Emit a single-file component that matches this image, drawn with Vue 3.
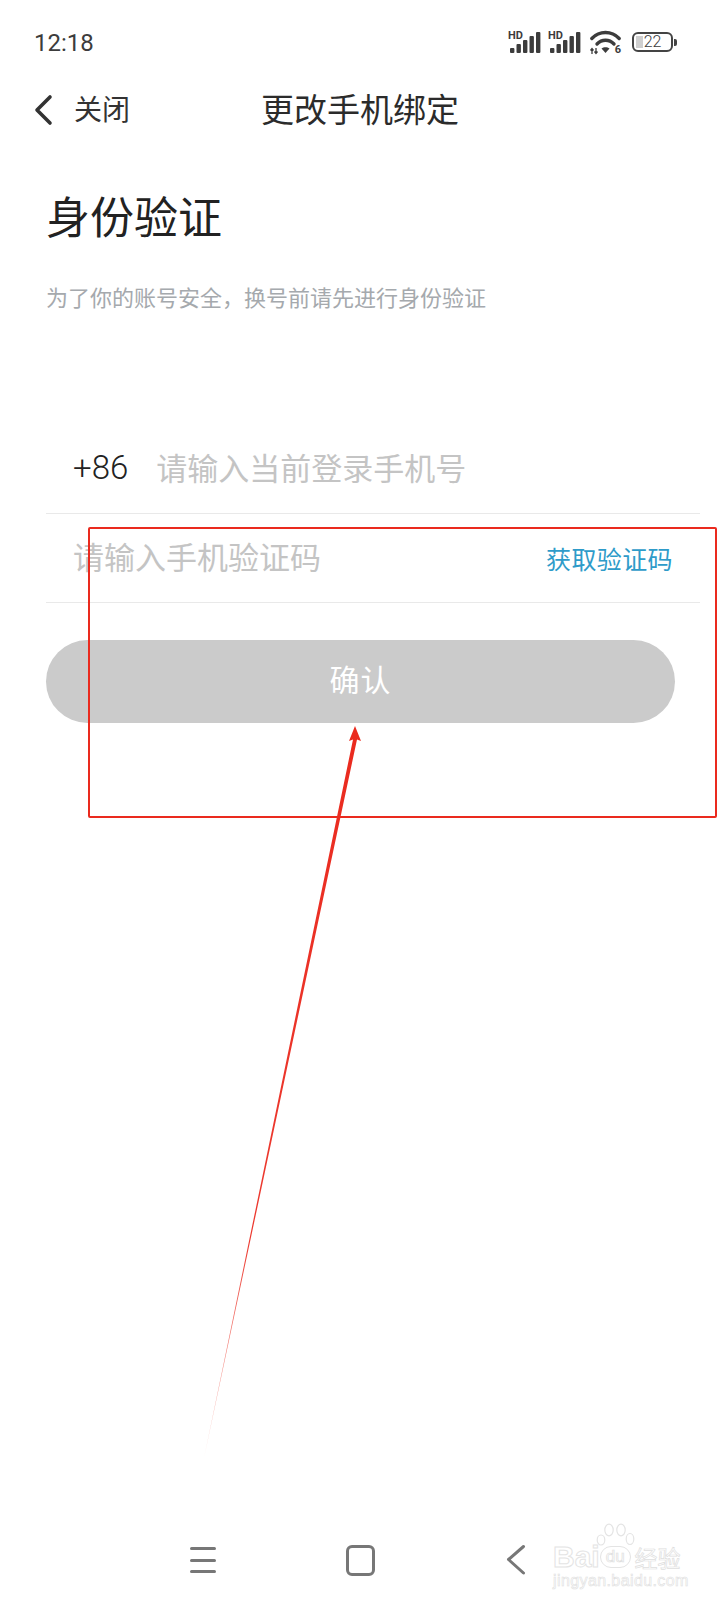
<template>
  <div class="page">
    <div class="status-bar">
      <span class="time">12:18</span>
      <div class="status-icons">
        <div v-for="n in 2" :key="n" class="signal">
          <span class="hd">HD</span>
          <svg width="33" height="21" viewBox="0 0 33 21">
            <rect v-for="b in bars" :key="b.x" :x="b.x" :y="21 - b.h" width="4.400" :height="b.h" rx="1" fill="#3c3c3c" />
          </svg>
        </div>
        <div class="wifi">
          <svg width="31" height="23" viewBox="0 0 31 23">
            <path d="M1.800 7.500C9.500 -0.500 21.500 -0.500 29.200 7.500" fill="none" stroke="#3c3c3c" stroke-width="3.400" stroke-linecap="round" />
            <path d="M7 13C11.800 8 19.200 8 24 13" fill="none" stroke="#3c3c3c" stroke-width="3.400" stroke-linecap="round" />
            <path d="M11.500 17.500C13.800 15.700 17.200 15.700 19.500 17.500L15.500 22Z" fill="#3c3c3c" />
            <path d="M2 18v5M0.500 19.500L2 17.500L3.500 19.500M6 17v5M4.500 20.500L6 22.500L7.500 20.500" stroke="#3c3c3c" stroke-width="1.300" fill="none" />
          </svg>
          <span class="wifi-six">6</span>
        </div>
        <div class="battery">
          <div class="battery-body">
            <span class="battery-fill"></span>
            <span class="battery-num">22</span>
          </div>
          <span class="battery-cap"></span>
        </div>
      </div>
    </div>

    <div class="nav">
      <div class="nav-left">
        <svg width="20" height="32" viewBox="0 0 20 32">
          <path d="M17 3L4 16L17 29" fill="none" stroke="#333" stroke-width="3.600" stroke-linecap="round" stroke-linejoin="round" />
        </svg>
        <span class="close-text">关闭</span>
      </div>
      <span class="nav-title">更改手机绑定</span>
      <div></div>
    </div>

    <h1 class="heading">身份验证</h1>
    <p class="sub">为了你的账号安全，换号前请先进行身份验证</p>

    <div class="form">
      <div class="row">
        <span class="code">+86</span>
        <span class="placeholder">请输入当前登录手机号</span>
      </div>
      <div class="row">
        <span class="placeholder">请输入手机验证码</span>
        <span class="get-code">获取验证码</span>
      </div>
    </div>

    <button class="confirm">确认</button>

    <div class="bottom-nav">
      <div class="menu-icon"><i></i><i></i><i></i></div>
      <div class="home-icon"></div>
      <svg class="back-icon" width="20" height="32" viewBox="0 0 20 32">
        <path d="M17.500 2.500L2.500 15.500L17.500 29" fill="none" stroke="#777" stroke-width="3" stroke-linecap="round" stroke-linejoin="round" />
      </svg>
    </div>

    <!-- annotation drawn on top of the screenshot -->
    <div class="mark-box"></div>
    <svg class="mark-arrow" width="720" height="1600" viewBox="0 0 720 1600">
      <defs>
        <linearGradient id="tail" x1="0" y1="0" x2="0" y2="1">
          <stop offset="0" stop-color="#ea2a1e" />
          <stop offset="0.7" stop-color="#ec3a30" />
          <stop offset="1" stop-color="#f8c8c2" />
        </linearGradient>
      </defs>
      <polygon points="355,726 361,741 357,739.500 204,1458 353,739.500 349,741" fill="url(#tail)" />
    </svg>

    <div class="watermark">
      <svg class="paw" width="40" height="25" viewBox="0 0 40 25">
        <g fill="#fff" stroke="#e4e4e4" stroke-width="1.200">
          <ellipse cx="5" cy="17" rx="3.800" ry="5" />
          <ellipse cx="13" cy="7" rx="4.200" ry="5.800" />
          <ellipse cx="25" cy="7" rx="4.200" ry="5.800" />
          <ellipse cx="34" cy="16" rx="3.800" ry="5.500" />
        </g>
      </svg>
      <div class="wm-main">
        <span class="wm-bai">Bai</span>
        <span class="wm-du">du</span>
        <span class="wm-cn">经验</span>
      </div>
      <div class="wm-url">jingyan.baidu.com</div>
    </div>
  </div>
</template>

<script setup>
const bars = [
  { x: 2, h: 5 },
  { x: 8.500, h: 9 },
  { x: 15, h: 13 },
  { x: 21.500, h: 17 },
  { x: 28, h: 21 }
]
</script>

<style>
html, body {
  margin: 0;
  background: #fff;
}
</style>

<style scoped>
.page {
  position: relative;
  width: 720px;
  height: 1600px;
  overflow: hidden;
  background: #fff;
  display: flex;
  flex-direction: column;
  font-family: "Noto Sans CJK SC", "Noto Sans", sans-serif;
}

.status-bar {
  height: 84px;
  flex-shrink: 0;
  display: flex;
  justify-content: space-between;
  align-items: center;
  padding: 0 43px 0 34px;
}

.time {
  font-family: Roboto, sans-serif;
  font-size: 24px;
  color: #3c3c3c;
  margin-top: 1px;
}

.status-icons {
  display: flex;
  align-items: center;
  gap: 7px;
  height: 24px;
}

.signal {
  position: relative;
  width: 33px;
  height: 21px;
}

.signal svg {
  display: block;
}

.hd {
  position: absolute;
  left: 0;
  top: 0;
  font-family: Roboto, sans-serif;
  font-size: 11px;
  line-height: 8px;
  font-weight: 700;
  color: #3c3c3c;
}

.wifi {
  position: relative;
  width: 31px;
  height: 23px;
  margin: 0 4px 0 2px;
}

.wifi svg {
  display: block;
  overflow: visible;
}

.wifi-six {
  position: absolute;
  right: 0;
  bottom: 0;
  font-family: Roboto, sans-serif;
  font-size: 11px;
  font-weight: 700;
  color: #3c3c3c;
  line-height: 9px;
}

.battery {
  display: flex;
  align-items: center;
}

.battery-body {
  box-sizing: border-box;
  position: relative;
  width: 41px;
  height: 20px;
  border: 2px solid #444;
  border-radius: 6px;
  display: flex;
  align-items: center;
  justify-content: center;
}

.battery-fill {
  position: absolute;
  left: 2px;
  top: 2px;
  bottom: 2px;
  width: 7px;
  background: #cfcfcf;
}

.battery-num {
  position: relative;
  font-family: Roboto, sans-serif;
  font-size: 16px;
  line-height: 16px;
  font-weight: 300;
  color: #3c3c3c;
}

.battery-cap {
  width: 3px;
  height: 7px;
  margin-left: 1px;
  background: #444;
  border-radius: 0 2px 2px 0;
}

.nav {
  box-sizing: border-box;
  height: 52px;
  padding-bottom: 4px;
  flex-shrink: 0;
  display: grid;
  grid-template-columns: 1fr auto 1fr;
  align-items: center;
}

.nav-left {
  display: flex;
  align-items: center;
  padding-left: 33px;
  gap: 21px;
}

.nav-left svg {
  display: block;
  margin-top: 4px;
}

.close-text {
  font-size: 28px;
  line-height: 40px;
  color: #333;
}

.nav-title {
  font-size: 33px;
  line-height: 46px;
  color: #2b2b2b;
}

.heading {
  margin: 49px 0 0 46px;
  font-size: 44px;
  line-height: 60px;
  font-weight: 400;
  color: #222;
}

.sub {
  margin: 36px 0 0 46px;
  font-size: 22px;
  line-height: 30px;
  color: #a5a9ad;
}

.form {
  margin: 114px 20px 0 46px;
}

.row {
  box-sizing: border-box;
  height: 89px;
  display: flex;
  align-items: center;
  padding: 0 27px 4px;
  border-bottom: 1px solid #e9e9e9;
}

.code {
  font-family: Roboto, sans-serif;
  font-size: 33px;
  font-weight: 300;
  color: #222;
  margin-right: 28px;
}

.placeholder {
  font-size: 31px;
  line-height: 44px;
  color: #c4c4c4;
}

.get-code {
  margin: 4px 0 0 auto;
  font-size: 25px;
  line-height: 36px;
  letter-spacing: 0.4px;
  color: #2e9bc9;
}

.confirm {
  display: block;
  width: 629px;
  height: 83px;
  margin: 37px 0 0 46px;
  padding: 0 0 8px;
  border: none;
  border-radius: 42px;
  background: #cbcbcb;
  color: #fff;
  font-family: inherit;
  font-size: 30px;
  letter-spacing: 1px;
}

.bottom-nav {
  position: absolute;
  left: 0;
  right: 0;
  bottom: 25px;
  height: 30px;
  display: flex;
  align-items: center;
  padding-left: 190px;
}

.menu-icon {
  width: 26px;
  height: 26px;
  display: flex;
  flex-direction: column;
  justify-content: space-between;
}

.menu-icon i {
  display: block;
  height: 3px;
  border-radius: 2px;
  background: #777;
}

.home-icon {
  width: 23px;
  height: 25px;
  margin-left: 130px;
  border: 3px solid #777;
  border-radius: 6px;
}

.back-icon {
  margin-left: 131px;
}

.mark-box {
  position: absolute;
  left: 88px;
  top: 527px;
  width: 625px;
  height: 287px;
  border: 2px solid #ea2a1e;
  border-radius: 2px;
}

.mark-arrow {
  position: absolute;
  left: 0;
  top: 0;
  pointer-events: none;
}

.watermark {
  position: absolute;
  left: 553px;
  top: 1523px;
  width: 130px;
  height: 66px;
}

.paw {
  position: absolute;
  left: 43px;
  top: 0;
}

.wm-main {
  position: absolute;
  left: 0;
  top: 20px;
  display: flex;
  align-items: center;
  white-space: nowrap;
}

.wm-bai {
  font-family: "Liberation Sans", sans-serif;
  font-size: 30px;
  line-height: 28px;
  font-weight: 700;
  color: #fff;
  -webkit-text-stroke: 1px #e4e4e4;
}

.wm-du {
  margin: 0 4px 0 0;
  padding: 0 5px;
  border: 1px solid #e4e4e4;
  border-radius: 11px;
  font-family: "Liberation Sans", sans-serif;
  font-size: 17px;
  line-height: 20px;
  color: #fff;
  -webkit-text-stroke: 0.7px #dedede;
}

.wm-cn {
  font-size: 23px;
  line-height: 24px;
  color: #fff;
  -webkit-text-stroke: 0.7px #dedede;
}

.wm-url {
  position: absolute;
  left: 0;
  top: 50px;
  font-family: "Liberation Sans", sans-serif;
  font-size: 16px;
  line-height: 16px;
  letter-spacing: 0.4px;
  white-space: nowrap;
  color: #fff;
  -webkit-text-stroke: 0.6px #e0e0e0;
}
</style>
